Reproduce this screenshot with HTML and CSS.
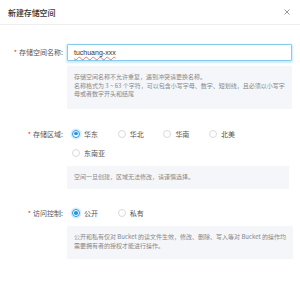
FILE: index.html
```html
<!DOCTYPE html>
<html lang="zh-CN">

<head>
    <meta charset="UTF-8">
    <meta name="viewport" content="width=device-width, initial-scale=1.0">
    <title>新建存储空间</title>
    <link rel="stylesheet" href="styles.css">
</head>

<body>
    <div class="dialog">
        <div class="dialog-header">
            <h2>新建存储空间</h2>
            <button class="close-btn" type="button">
                <svg width="6" height="6" viewBox="0 0 6 6">
                    <path d="M0.5 0.5 L5.5 5.5 M5.5 0.5 L0.5 5.5" stroke="#9a9a9a" stroke-width="1" fill="none"/>
                </svg>
            </button>
        </div>

        <form class="dialog-body">
            <div class="form-item">
                <label class="form-label required">存储空间名称:</label>
                <div class="form-content">
                    <div class="text-input" contenteditable="true"><span class="misspelled">tuchuang-xxx</span></div>
                    <div class="help help-input">
                        存储空间名称不允许重复，遇到冲突请更换名称。<br>
                        名称格式为 3 ~ 63 个字符，可以包含小写字母、数字、短划线，且必须以小写字<br>
                        母或者数字开头和结尾
                    </div>
                </div>
            </div>

            <div class="form-item">
                <span class="form-label required">存储区域:</span>
                <div class="form-content">
                    <div class="radio-group">
                        <label class="radio"><span class="radio-dot checked"></span>华东</label>
                        <label class="radio"><span class="radio-dot"></span>华北</label>
                        <label class="radio"><span class="radio-dot"></span>华南</label>
                        <label class="radio"><span class="radio-dot"></span>北美</label>
                        <label class="radio"><span class="radio-dot"></span>东南亚</label>
                    </div>
                    <div class="help help-region">空间一旦创建，区域无法修改，请谨慎选择。</div>
                </div>
            </div>

            <div class="form-item">
                <span class="form-label required">访问控制:</span>
                <div class="form-content">
                    <div class="radio-group">
                        <label class="radio"><span class="radio-dot checked"></span>公开</label>
                        <label class="radio"><span class="radio-dot"></span>私有</label>
                    </div>
                    <div class="help">
                        公开和私有仅对 Bucket 的读文件生效，修改、删除、写入等对 Bucket 的操作均<br>
                        需要拥有者的授权才能进行操作。
                    </div>
                </div>
            </div>
        </form>
    </div>
</body>
</html>
```

FILE: styles.css
```css
body {
    margin: 0;
    padding: 0;
    background-color: #fff;
    font-family: "Noto Sans CJK SC", "Liberation Sans", sans-serif;
    color: #555;
}

.dialog {
    width: 300px;
}

.dialog-header {
    display: flex;
    justify-content: space-between;
    align-items: center;
    height: 24px;
    padding: 0 10px 0 8px;
    border-bottom: 1px solid #eeeeee;
}

.dialog-header h2 {
    margin: 0;
    font-size: 8px;
    font-weight: 500;
    color: #333;
    letter-spacing: -0.1px;
}

.close-btn {
    display: flex;
    padding: 0;
    border: none;
    background: none;
    cursor: pointer;
}

.dialog-body {
    padding: 19px 11px 0 0;
}

.form-item {
    display: flex;
    margin-bottom: 18.5px;
}

.form-label {
    flex: 0 0 63px;
    width: 63px;
    padding-right: 4px;
    text-align: right;
    font-size: 7px;
    line-height: 17px;
    color: #555;
    white-space: nowrap;
}

.form-item + .form-item .form-label {
    line-height: 12px;
}

.required::before {
    content: "*";
    color: #f5222d;
    margin-right: 2px;
}

.form-content {
    flex: 1;
}

.text-input {
    box-sizing: border-box;
    height: 17px;
    padding: 0 6px;
    border: 1px solid #86cbe9;
    border-radius: 1px;
    font-family: "Liberation Sans", sans-serif;
    font-size: 7px;
    line-height: 15px;
    color: #333;
    outline: none;
    box-shadow: 0 1px 2px 1px rgba(110, 195, 235, 0.35);
}

.misspelled {
    text-decoration: underline wavy rgba(225, 80, 80, 0.75);
    text-decoration-thickness: 0.35px;
    text-underline-offset: 1px;
}

.help {
    margin-top: 7px;
    padding: 7px 7px 9px;
    background-color: #f5f6fa;
    font-size: 6px;
    line-height: 8.5px;
    color: #888;
    white-space: nowrap;
}

.help-input {
    margin-top: 5px;
    padding-bottom: 10.5px;
}

.help-region {
    padding-bottom: 7.5px;
}

.radio-group {
    display: grid;
    grid-template-columns: repeat(4, 45.7px);
    row-gap: 7px;
    padding-left: 5px;
}

.radio {
    display: flex;
    align-items: center;
    height: 12px;
    font-size: 7px;
    color: #555;
    cursor: pointer;
}

.radio-dot {
    position: relative;
    box-sizing: border-box;
    width: 8px;
    height: 8px;
    margin-right: 4px;
    border: 1px solid #dadada;
    border-radius: 50%;
}

.radio-dot.checked {
    border-color: #2296e6;
    box-shadow: 0 0 0 1.5px rgba(34, 150, 230, 0.18);
}

.radio-dot.checked::after {
    content: "";
    position: absolute;
    top: 1.2px;
    left: 1.2px;
    width: 3.6px;
    height: 3.6px;
    border-radius: 50%;
    background-color: #2296e6;
}
```
